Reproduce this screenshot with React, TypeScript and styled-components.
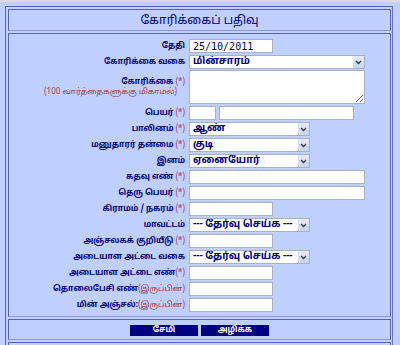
import React from "react";
import styled, { createGlobalStyle } from "styled-components";

const GlobalStyle = createGlobalStyle`
  html, body {
    margin: 0;
    padding: 0;
    background: #bfcfff;
  }
  body {
    border-top: 2px solid #dcdcdc;
    padding: 4px 0 0 5px;
    font-family: "Noto Sans Tamil", "Lohit Tamil", "Noto Sans", "DejaVu Sans", sans-serif;
    color: #000080;
  }
`;

const Frame = styled.div`
  width: 388px;
  box-sizing: border-box;
  display: flex;
  flex-direction: column;
  gap: 2px;
  padding: 2px 1px 2px 2px;
  border: 1px solid #5a62b2;
  border-right-color: #6a72c0;
`;

const Cell = styled.div<{ $h?: number }>`
  box-sizing: border-box;
  border: 1px solid #5a62b2;
  border-bottom-color: #8e98d6;
  ${(p) => (p.$h ? `height: ${p.$h}px;` : "")}
`;

const TitleCell = styled(Cell)`
  height: 22px;
  display: flex;
  align-items: center;
  justify-content: center;
  font-size: 12px;
  line-height: 14px;
  color: #000080;
  padding-top: 1px;
`;

const FormCell = styled(Cell)`
  padding: 5px 0 4px 0;
  display: flex;
  flex-direction: column;
  gap: 2px;
`;

const Row = styled.div<{ $tight?: boolean }>`
  display: grid;
  grid-template-columns: 176px 1fr;
  column-gap: 4px;
  align-items: center;
  height: ${(p) => (p.$tight ? "34px" : "14px")};
  ${(p) => (p.$tight ? "margin-top: -1px;" : "")}
`;

const Label = styled.div`
  text-align: right;
  font-size: 8px;
  font-weight: 700;
  line-height: 10px;
  white-space: nowrap;
  color: #000080;
`;

const Req = styled.span`
  font-weight: 400;
  color: #a04040;
`;

const Note = styled.div`
  font-size: 8px;
  font-weight: 400;
  line-height: 10px;
  padding-right: 8px;
  color: #a04040;
`;

const Fields = styled.div`
  display: flex;
  gap: 3px;
`;

const TextInput = styled.input<{ $w: number }>`
  box-sizing: border-box;
  width: ${(p) => p.$w}px;
  height: 14px;
  margin: 0;
  padding: 0 3px;
  border: 1px solid #a7b0c4;
  background: #fff;
  font-family: "DejaVu Sans Mono", monospace;
  font-size: 10px;
  line-height: 12px;
  color: #000080;
  outline: none;
  display: block;
`;

const TextArea = styled.textarea`
  box-sizing: border-box;
  width: 176px;
  height: 34px;
  margin: 0;
  padding: 0;
  border: 1px solid #a7b0c4;
  background: #fff;
  display: block;
`;

const SelectWrap = styled.div<{ $w: number }>`
  position: relative;
  box-sizing: border-box;
  width: ${(p) => p.$w}px;
  height: 14px;
  border: 1px solid #a7b0c4;
  background: #fff;
  overflow: hidden;
`;

const Select = styled.select`
  appearance: none;
  -webkit-appearance: none;
  display: block;
  box-sizing: border-box;
  width: 100%;
  height: 12px;
  margin: 0;
  padding: 0 0 0 3px;
  border: none;
  border-radius: 0;
  background: transparent;
  font-family: inherit;
  font-size: 10px;
  font-weight: 700;
  line-height: 12px;
  color: #000080;
  outline: none;
`;

const Arrow = styled.span`
  position: absolute;
  top: 0;
  right: 0;
  width: 11px;
  height: 12px;
  background: linear-gradient(#e4ecfa, #c6d4ee);
  display: flex;
  align-items: center;
  justify-content: center;
  pointer-events: none;
`;

const ButtonCell = styled(Cell)`
  height: 21px;
  display: flex;
  align-items: center;
  justify-content: center;
  gap: 3px;
  padding-top: 1px;
`;

const Button = styled.button`
  width: 68px;
  height: 11px;
  margin: 0;
  padding: 0;
  border: none;
  background: #000080;
  color: #fff;
  font-family: inherit;
  font-size: 8px;
  font-weight: 700;
  line-height: 11px;
`;

function Dropdown({ w, value }: { w: number; value: string }) {
  return (
    <SelectWrap $w={w}>
      <Select defaultValue={value}>
        <option>{value}</option>
      </Select>
      <Arrow>
        <svg width="7" height="5" viewBox="0 0 7 5">
          <path d="M1 1 L3.5 3.5 L6 1" fill="none" stroke="#2a3560" strokeWidth="1.3" />
        </svg>
      </Arrow>
    </SelectWrap>
  );
}

const pick = "--- தேர்வு செய்க ---";

export default function App(): React.ReactElement {
  return (
    <>
      <GlobalStyle />
      <Frame>
        <TitleCell>கோரிக்கைப் பதிவு</TitleCell>
        <FormCell>
          <Row>
            <Label>தேதி</Label>
            <TextInput $w={84} defaultValue="25/10/2011" />
          </Row>
          <Row>
            <Label>கோரிக்கை வகை</Label>
            <Dropdown w={176} value="மின்சாரம்" />
          </Row>
          <Row $tight>
            <Label>
              கோரிக்கை <Req>(*)</Req>
              <Note>(100 வார்த்தைகளுக்கு மிகாமல்)</Note>
            </Label>
            <TextArea />
          </Row>
          <Row>
            <Label>
              பெயர் <Req>(*)</Req>
            </Label>
            <Fields>
              <TextInput $w={27} />
              <TextInput $w={135} />
            </Fields>
          </Row>
          <Row>
            <Label>
              பாலினம் <Req>(*)</Req>
            </Label>
            <Dropdown w={121} value="ஆண்" />
          </Row>
          <Row>
            <Label>
              மனுதாரர் தன்மை <Req>(*)</Req>
            </Label>
            <Dropdown w={121} value="குடி" />
          </Row>
          <Row>
            <Label>இனம்</Label>
            <Dropdown w={121} value="ஏனையோர்" />
          </Row>
          <Row>
            <Label>
              கதவு எண் <Req>(*)</Req>
            </Label>
            <TextInput $w={176} />
          </Row>
          <Row>
            <Label>
              தெரு பெயர் <Req>(*)</Req>
            </Label>
            <TextInput $w={176} />
          </Row>
          <Row>
            <Label>
              கிராமம் / நகரம் <Req>(*)</Req>
            </Label>
            <TextInput $w={84} />
          </Row>
          <Row>
            <Label>மாவட்டம்</Label>
            <Dropdown w={121} value={pick} />
          </Row>
          <Row>
            <Label>
              அஞ்சலகக் குறியீடு <Req>(*)</Req>
            </Label>
            <TextInput $w={84} />
          </Row>
          <Row>
            <Label>அடையாள அட்டை வகை</Label>
            <Dropdown w={121} value={pick} />
          </Row>
          <Row>
            <Label>
              அடையாள அட்டை எண்<Req>(*)</Req>
            </Label>
            <TextInput $w={84} />
          </Row>
          <Row>
            <Label>
              தொலைபேசி எண்<Req>(இருப்பின்)</Req>
            </Label>
            <TextInput $w={84} />
          </Row>
          <Row>
            <Label>
              மின் அஞ்சல்:<Req>(இருப்பின்)</Req>
            </Label>
            <TextInput $w={84} />
          </Row>
        </FormCell>
        <ButtonCell>
          <Button>சேமி</Button>
          <Button>அழிக்க</Button>
        </ButtonCell>
        <Cell $h={30} />
      </Frame>
    </>
  );
}
